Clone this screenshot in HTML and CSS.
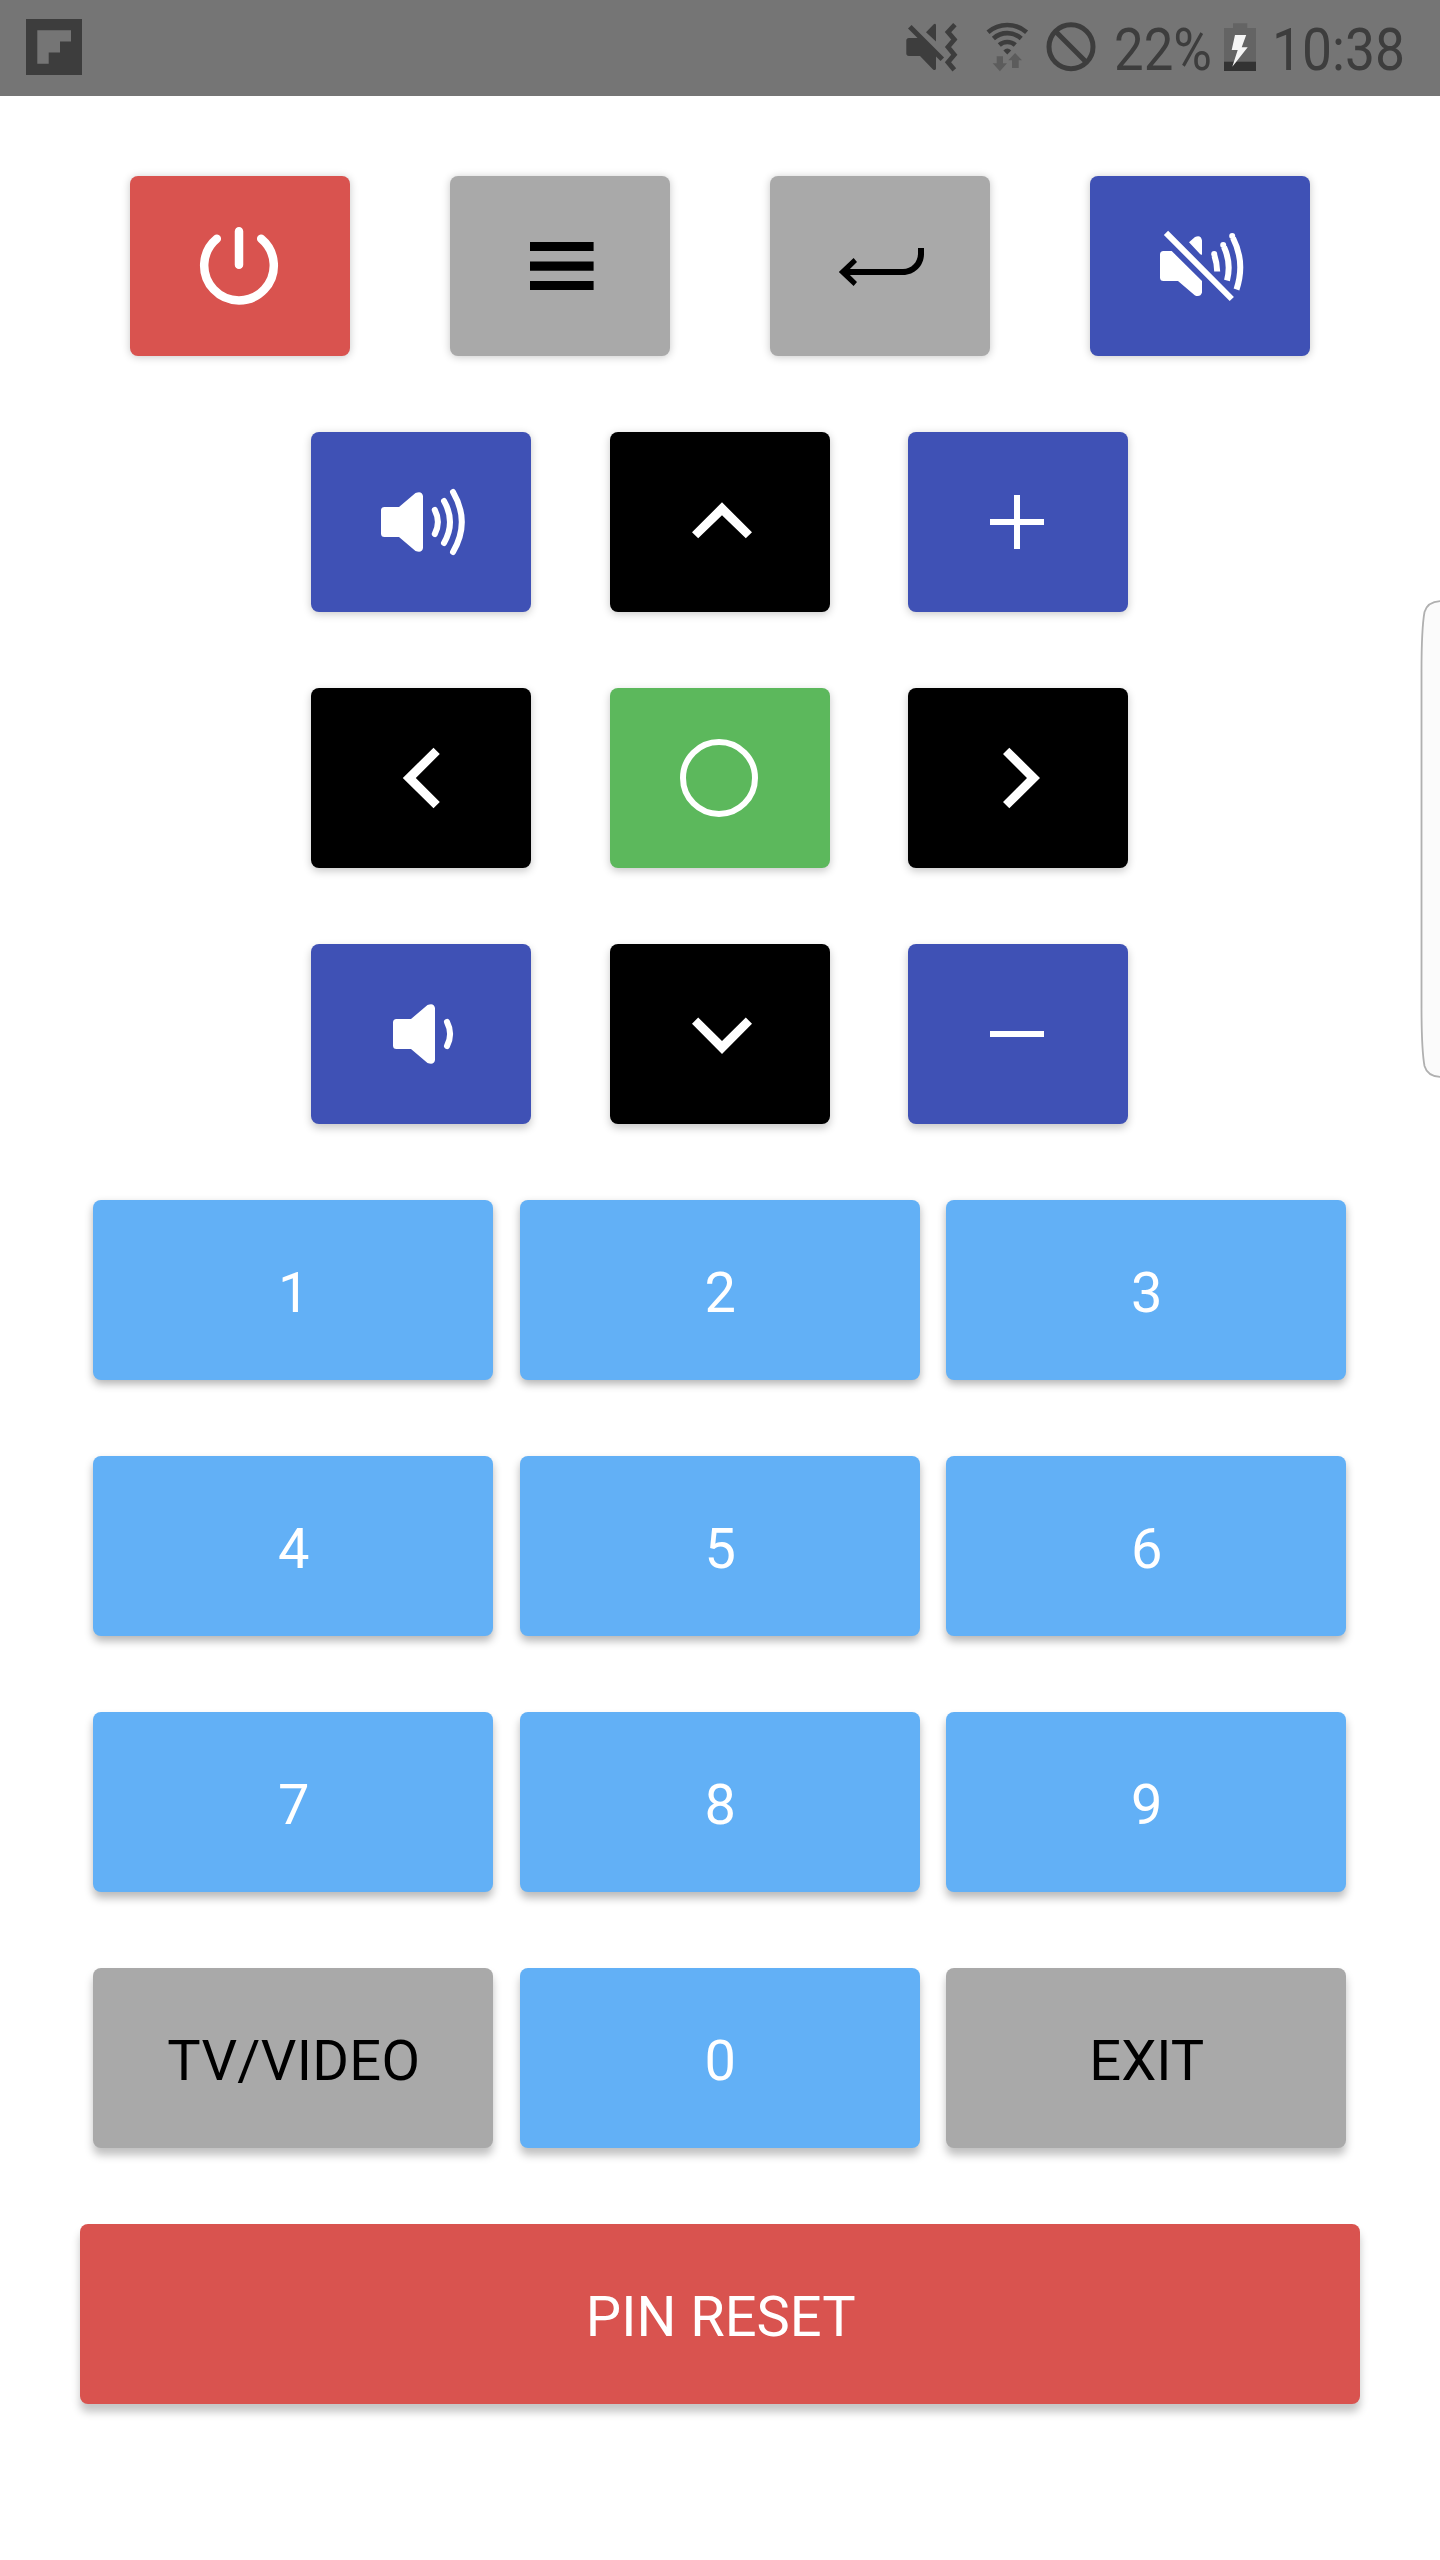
FILE: index.html
```html
<!DOCTYPE html>
<html lang="en">
<head>
<meta charset="utf-8">
<title>TV Remote</title>
<link rel="stylesheet" href="styles.css">
</head>
<body>
<header class="status">
  <svg class="flip" width="56" height="56" viewBox="26 19 56 56"><path fill="#3d3d3d" d="M26 19h56v56H26z"/><path fill="#757575" d="M37.3 30.3H71v11.2H60v11H48.7v11.2H37.3z"/></svg>
  <svg class="mute" width="52" height="56" viewBox="906 19 52 56"><g fill="#3d3d3d"><path d="M909 38h11l16 16v14.5q-.5 2.500-3 1L920 56h-11q-2.700 0-2.700-2.700V40.700Q906.300 38 909 38zM926 32.300l7.500-7.800q2-1.500 2.500.5v16.500z"/></g><g fill="none" stroke="#3d3d3d"><path stroke-width="5" d="M909.800 26.700l32.500 32.600"/><path stroke-width="4.800" d="M954.900 24.600L948 32l6.300 7.500-6.300 7.500 6.300 7.800-6.300 7.500 6.300 7.600"/></g></svg>
  <svg class="wifi" width="44" height="56" viewBox="986 19 44 56"><g fill="none" stroke="#3d3d3d" stroke-width="4.600"><path d="M988 32.200a29.400 29.400 0 0 1 38.600 0M993.400 38.500a20.700 20.700 0 0 1 27.800 0M999.300 45a12 12 0 0 1 16 0"/></g><path fill="#3d3d3d" d="M1003.400 50.400q3.900-4 7.800 0l-3.900 4z"/><path fill="#5c5c5c" d="M996.700 56.300h6.300v7h4l-7.100 7.900-7.200-7.900h4zM1012 68v-7.700h-3.700l6.800-7.300 6.900 7.300h-3.300V68z"/></svg>
  <svg class="block" width="50" height="56" viewBox="1045.500 19 50 56"><g fill="none" stroke="#3d3d3d" stroke-width="5"><circle cx="1070.500" cy="46.800" r="22"/><path d="M1054.900 31.200l31.200 31.200"/></g></svg>
  <span class="level"><span class="narrow">22%</span></span>
  <svg class="battery" width="32" height="56" viewBox="1224 19 32 56"><path fill="#646464" d="M1224 28h9v-4.700h14.300V28h8.700v43h-32z"/><path fill="#333" d="M1224 61.700h32V71h-32z"/><path fill="#f5f5f5" d="M1235 35h11.200l-4.500 12.300h6l-15.400 19.400 5.400-16.700h-6z"/></svg>
  <span class="clock"><span class="narrow">10:38</span></span>
</header>
<main class="remote">
  <div class="row row-top">
    <button class="key red" aria-label="Power"><svg viewBox="130 176 220 180"><path fill="none" stroke="#fff" stroke-width="8.500" stroke-linecap="round" d="M239 231.200v33.600M216.800 238.800a34.800 34.800 0 1 0 44.400 0"/></svg></button>
    <button class="key gray" aria-label="Menu"><svg viewBox="450 176 220 180"><path d="M530 242h63.600v9H530zM530 261.500h63.600v9.300H530zM530 281h63.600v9H530z"/></svg></button>
    <button class="key gray" aria-label="Back"><svg viewBox="770 176 220 180"><path d="M838.800 272l14.800-14 3.400 4-7.100 7H903c8.500 0 15-7 15-15.500V248h6v6c0 12-9.500 21-21 21h-53.100l7.100 7-3.400 4z"/></svg></button>
    <button class="key blue" aria-label="Mute"><svg viewBox="1090 176 220 180"><path fill="#fff" d="M1163.500 251h8.200l30.300 30v11.500q-1.500 5-7 3L1178 281h-14.500q-3.500 0-3.500-3.500v-23q0-3.500 3.500-3.500zM1189 242.300l6-5.300q6-2.500 7 3.500v14q-.8.800-2-.5z"/><g fill="none" stroke="#fff" stroke-width="6"><path d="M1166 232.800l65.800 66.200M1217.200 271.500q-.3-9-2.800-16M1227 280.500q4.500-17-3-33.500M1236.500 289.500q9-27-3.500-51.500"/></g><g fill="#fff"><circle cx="1214.200" cy="254" r="3"/><circle cx="1223.200" cy="245" r="3"/><circle cx="1232.200" cy="236" r="3"/></g></svg></button>
  </div>
  <div class="row row-pad lift-2">
    <button class="key blue" aria-label="Volume up"><svg viewBox="311 432 220 180"><path fill="#fff" d="M384.500 507H399l16.500-14q6.500-2.500 7.500 3v52q-1 5.500-7.500 3L399 537h-14.500q-3.500 0-3.500-3.500v-23q0-3.500 3.500-3.500z"/><path fill="none" stroke="#fff" stroke-width="6" stroke-linecap="round" d="M434.800 510q6.200 12 0 24M444 501q12 21 0 42M453 492q17.600 30 0 60"/></svg></button>
    <button class="key black" aria-label="Up"><svg viewBox="610 432 220 180"><path fill="#fff" d="M722 502.300l30 30-6.200 6L722 515.300l-23.800 23-6.200-6z"/></svg></button>
    <button class="key blue" aria-label="Channel up"><svg viewBox="908 432 220 180"><path fill="#fff" d="M990 519h24v-24h6v24h24v6h-24v24h-6v-24h-24z"/></svg></button>
  </div>
  <div class="row row-pad lift-3">
    <button class="key black" aria-label="Left"><svg viewBox="311 688 220 180"><path fill="#fff" d="M402.800 778l30.700-30.300 6.300 6.300-24 24 24 24-6.300 6.300z"/></svg></button>
    <button class="key green" aria-label="OK"><svg viewBox="610 688 220 180"><circle cx="719" cy="778" r="36" fill="none" stroke="#fff" stroke-width="6"/></svg></button>
    <button class="key black" aria-label="Right"><svg viewBox="908 688 220 180"><path fill="#fff" d="M1040 778l-30.700-30.300-6.300 6.300 24 24-24 24 6.300 6.300z"/></svg></button>
  </div>
  <div class="row row-pad lift-4">
    <button class="key blue" aria-label="Volume down"><svg viewBox="311 944 220 180"><path fill="#fff" d="M396.500 1019H411l16.500-14q6.500-2.500 7.500 3v52q-1 5.500-7.500 3L411 1049h-14.500q-3.500 0-3.500-3.500v-23q0-3.500 3.500-3.500z"/><path fill="none" stroke="#fff" stroke-width="6" stroke-linecap="round" d="M447 1022q6.200 12 0 24"/></svg></button>
    <button class="key black" aria-label="Down"><svg viewBox="610 944 220 180"><path fill="#fff" d="M722 1054l30-30.300-6.200-6.200L722 1041l-23.800-23.500-6.200 6.200z"/></svg></button>
    <button class="key blue" aria-label="Channel down"><svg viewBox="908 944 220 180"><path fill="#fff" d="M990 1031h54v6h-54z"/></svg></button>
  </div>
  <div class="row row-num lift-5"><button class="key sky">1</button><button class="key sky">2</button><button class="key sky">3</button></div>
  <div class="row row-num lift-6"><button class="key sky">4</button><button class="key sky">5</button><button class="key sky">6</button></div>
  <div class="row row-num lift-7"><button class="key sky">7</button><button class="key sky">8</button><button class="key sky">9</button></div>
  <div class="row row-num lift-8"><button class="key gray wide">TV/VIDEO</button><button class="key sky">0</button><button class="key gray">EXIT</button></div>
  <div class="row row-pin lift-9"><button class="key red">PIN RESET</button></div>
</main>
<svg class="edge" width="24" height="480" viewBox="1416 599 24 480"><path fill="#fbfbfb" stroke="#b0b0b0" stroke-width="1.800" d="M1442 601c-10 0-15.500 4-17.500 11-2 11-3 30-3 60v334c0 30 1 49 3 60 2 7 7.500 11 17.500 11"/></svg>
</body>
</html>
```
FILE: styles.css
```css
* {
  box-sizing: border-box;
}

body {
  margin: 0;
  width: 1440px;
  height: 2560px;
  position: relative;
  overflow: hidden;
  background: #fff;
  font-family: Roboto, "Liberation Sans", sans-serif;
}

.status {
  display: flex;
  align-items: flex-start;
  height: 96px;
  padding: 19px 0 0 26px;
  background: #757575;
  color: #3d3d3d;
}

.status svg {
  flex: none;
  display: block;
}

.mute {
  margin-left: 824px;
}

.wifi {
  margin-left: 28px;
}

.block {
  margin-left: 15.5px;
}

.level,
.clock {
  height: 62px;
  font-size: 60px;
  line-height: 62px;
  white-space: nowrap;
}

.level {
  width: 98px;
  margin-left: 18px;
}

.battery {
  margin-left: 12.5px;
}

.clock {
  margin-left: 16px;
  width: 140px;
}

.narrow {
  display: inline-block;
  transform: scaleX(0.88);
  transform-origin: 0 0;
}

.clock .narrow {
  transform: scaleX(0.89);
}

.remote {
  display: flex;
  flex-direction: column;
  gap: 76px;
  padding-top: 80px;
}

.row {
  --drop: 1px;
  --blur: 8px;
  --tint: 0.22;
  display: grid;
  height: 180px;
}

.row-top {
  grid-template-columns: repeat(4, 220px);
  gap: 100px;
  padding-left: 130px;
}

.row-pad {
  grid-template-columns: 220px 220px 220px;
  column-gap: 78.5px;
  padding-left: 311px;
}

.row-num {
  grid-template-columns: repeat(3, 400px);
  column-gap: 26.5px;
  padding-left: 93px;
}

.row-pin {
  padding: 0 80px;
}

.lift-2 { --drop: 2px; }
.lift-3 { --drop: 3px; }
.lift-4 { --drop: 4px; }
.lift-5 { --drop: 4px; --tint: 0.3; }
.lift-6 { --drop: 5px; --tint: 0.29; }
.lift-7 { --drop: 6px; --tint: 0.27; }
.lift-8 { --drop: 7px; --tint: 0.25; }
.lift-9 { --drop: 8px; --tint: 0.23; }

.key {
  border: 0;
  margin: 0;
  padding: 6px 0 0 1.5px;
  border-radius: 8px;
  box-shadow: 0 var(--drop) var(--blur) rgba(0, 0, 0, var(--tint));
  font: 400 56px Roboto, "Liberation Sans", sans-serif;
  color: #fff;
}

.key:has(svg) {
  padding: 0;
}

.key svg {
  display: block;
  width: 220px;
  height: 180px;
}

.wide {
  letter-spacing: 0.3px;
}

.red { background: #d9534f; }
.gray { background: #a9a9a9; color: #000; }
.blue { background: #3f51b5; }
.black { background: #000; }
.green { background: #5cb85c; }
.sky { background: #62b0f6; }

/* Edge panel handle, over the page's right side */
.edge {
  position: absolute;
  top: 599px;
  right: 0;
}
```
